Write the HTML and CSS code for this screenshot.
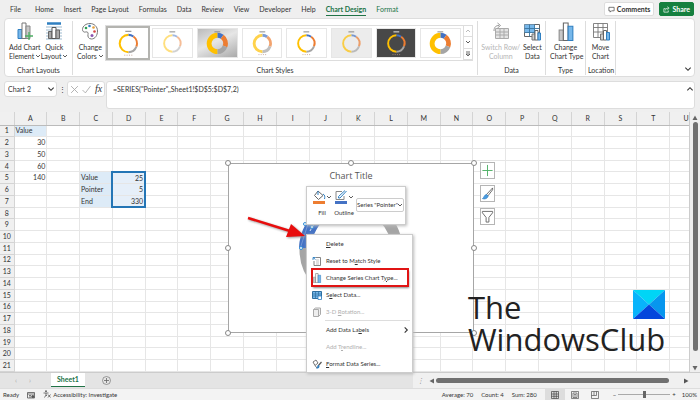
FILE: index.html
```
<!DOCTYPE html>
<html lang="en">
<head>
<meta charset="utf-8">
<title>Chart 2</title>
<link rel="stylesheet" href="styles.css">
</head>
<body>
<svg class="defs" aria-hidden="true">
  <symbol id="chev" viewBox="0 0 6 6"><path d="M1 2l2 2 2-2" fill="none" stroke="currentColor" stroke-width=".8"/></symbol>
  <symbol id="bars" viewBox="0 0 14 18"><path d="M.5 7.500h4v10h-4z" fill="#c8c8c8" stroke="#8a8a8a"/><path d="M4.500 1h4.500v16.500H4.500z" fill="#fff" stroke="#666"/><path d="M9 4h4.500v13.500H9z" fill="#76b7ea" stroke="#2f7fc1"/></symbol>
</svg>

<header class="top">
  <nav class="tabs">
    <a href="#">File</a><a href="#">Home</a><a href="#">Insert</a><a href="#">Page Layout</a><a href="#">Formulas</a><a href="#">Data</a><a href="#">Review</a><a href="#">View</a><a href="#">Developer</a><a href="#">Help</a><a href="#" class="active">Chart Design</a><a href="#" class="green">Format</a>
  </nav>
  <button class="comments"><svg class="i7" viewBox="0 0 8 8"><path d="M1 1.500h6v4H4L2.500 7V5.500H1z" fill="none" stroke="#444" stroke-width=".8"/></svg>Comments</button>
  <button class="share"><svg class="i7" viewBox="0 0 8 8"><path d="M3 3H1v4h5V5M3 5c0-2 1-2.500 3-2.500M5 .8l2 1.700-2 1.700" fill="none" stroke="#fff" stroke-width=".8"/></svg>Share</button>
</header>

<section class="ribbon">
  <div class="group layouts">
    <div class="tools">
      <button class="tool"><svg class="ico" viewBox="0 0 18 19"><path d="M2 7.500h4v9H2z" fill="#76b7ea" stroke="#2f7fc1"/><path d="M6 1h4v15.500H6z" fill="#fff" stroke="#777"/><path d="M10 4h4v12.500h-4z" fill="#c8c8c8" stroke="#888"/><path d="M13 10v8M9 14h8" stroke="#4caf63" stroke-width="1.300"/></svg>Add Chart<br>Element <svg class="i6 inline"><use href="#chev"/></svg></button>
      <button class="tool"><svg class="ico" viewBox="0 0 18 19"><path d="M2 1.500h14" stroke="#2f7fc1" stroke-width="2.500"/><path d="M1 5h16M1 8h16M1 11h16M1 14h16M1 17h16" stroke="#85a9c4" stroke-width=".8"/><path d="M3.500 9.500H7v7H3.500z" fill="#aaa" stroke="#666"/><path d="M7 5.500h4v11H7z" fill="#fff" stroke="#555"/><path d="M11 8h3.500v8.500H11z" fill="#aaa" stroke="#666"/></svg>Quick<br>Layout <svg class="i6 inline"><use href="#chev"/></svg></button>
    </div>
    <div class="caption">Chart Layouts</div>
  </div>
  <div class="group styles">
    <div class="tools">
      <button class="tool"><svg class="ico" viewBox="0 0 18 19"><path d="M9 1.500c-4 0-7.500 2.500-7.500 6 0 2 1.500 3 3 2.500 2-.5 3 .5 2.500 2.500-.5 2 .5 4.500 3.500 4.500 3.500 0 6-3.500 6-8 0-4.500-3.500-7.500-7.500-7.500z" fill="#fff" stroke="#777"/><circle cx="5" cy="6" r="1.300" fill="#2f9e55"/><circle cx="8.500" cy="4" r="1.300" fill="#2f7fc1"/><circle cx="12.500" cy="5.500" r="1.300" fill="#e5a03c"/><circle cx="13.500" cy="9.500" r="1.300" fill="#d64545"/><circle cx="11" cy="13.500" r="1.500" fill="#8c55b0"/></svg>Change<br>Colors <svg class="i6 inline"><use href="#chev"/></svg></button>
      <div class="gallery">
        <div class="thumbs" id="thumbs"></div>
        <div class="spin"><button aria-label="Up" class="dim"><svg class="i6 up"><use href="#chev"/></svg></button><button aria-label="Down"><svg class="i6"><use href="#chev"/></svg></button><button aria-label="More"><svg class="i6" viewBox="0 0 6 6"><path d="M1 1h4M1 3l2 2 2-2z" fill="none" stroke="#444" stroke-width=".8"/></svg></button></div>
      </div>
    </div>
    <div class="caption">Chart Styles</div>
  </div>
  <div class="group data">
    <div class="tools">
      <button class="tool off" disabled><svg class="ico" viewBox="0 0 18 19"><path d="M3.500 6.500h13v10h-13zM3.500 10h13M3.500 13h13M8 6.500v10M12 6.500v10" fill="#e4e4e4" stroke="#aaa"/><path d="M2 9c0-4 2-5.500 5-5.500M5.500 1l3 2.500-3 2.500" fill="none" stroke="#999"/></svg>Switch Row/<br>Column</button>
      <button class="tool"><svg class="ico" viewBox="0 0 18 19"><path d="M1.500 2.500h15v12h-15z" fill="#fff" stroke="#666"/><path d="M1.500 2.500h10v8h-10z" fill="#76b7ea"/><path d="M1.500 6.500h15M1.500 10.500h15M6.500 2.500v12M11.500 2.500v12" stroke="#39749f" stroke-width=".9"/><path d="M9 12h3v6H9z" fill="#ccc" stroke="#777"/><path d="M12 8.500h3V18h-3z" fill="#fff" stroke="#666"/><path d="M15 11h2.500v7H15z" fill="#76b7ea" stroke="#2f7fc1"/></svg>Select<br>Data</button>
    </div>
    <div class="caption">Data</div>
  </div>
  <div class="group type">
    <div class="tools"><button class="tool"><svg class="ico"><use href="#bars"/></svg>Change<br>Chart Type</button></div>
    <div class="caption">Type</div>
  </div>
  <div class="group location">
    <div class="tools"><button class="tool"><svg class="ico" viewBox="0 0 18 19"><path d="M1.500 1.500h14v14h-14zM1.500 5.500h14M1.500 10h14M6 1.500v14M11 1.500v14" fill="#fff" stroke="#777" stroke-width=".9"/><path d="M8.500 12h3v6h-3z" fill="#ccc" stroke="#777"/><path d="M11.500 8.500h3V18h-3z" fill="#fff" stroke="#666"/><path d="M14.500 10.500h3V18h-3z" fill="#76b7ea" stroke="#2f7fc1"/></svg>Move<br>Chart</button></div>
    <div class="caption">Location</div>
  </div>
  <button class="collapse" aria-label="Collapse ribbon"><svg class="i8"><use href="#chev"/></svg></button>
</section>

<section class="formula">
  <label class="namebox"><input value="Chart 2" aria-label="Name box"><svg class="i8"><use href="#chev"/></svg></label>
  <span class="dots">⋮</span>
  <div class="fx"><svg class="i9" viewBox="0 0 8 8"><path d="M1 1l6 6M7 1L1 7" stroke="#aaa" stroke-width=".8"/></svg><svg class="i9" viewBox="0 0 8 8"><path d="M.5 4.500L3 7l4.500-6" fill="none" stroke="#aaa" stroke-width=".8"/></svg><i>fx</i></div>
  <div class="bar"><input value="=SERIES(&quot;Pointer&quot;,,Sheet1!$D$5:$D$7,2)" aria-label="Formula"><svg class="i8 up"><use href="#chev"/></svg></div>
</section>

<main class="sheet">
  <div class="cells"><table id="grid"></table></div>
  <div class="vscroll"><svg class="i6" viewBox="0 0 6 6"><path d="M3 .5L5.500 5h-5z" fill="#666"/></svg><span></span><svg class="i6" viewBox="0 0 6 6"><path d="M3 5.500L5.500 1h-5z" fill="#666"/></svg></div>

  <div class="chart">
    <h2>Chart Title</h2>
    <svg class="donut" viewBox="0 0 104 104">
      <circle cx="52" cy="52" r="46" fill="none" stroke="#a5a5a5" stroke-width="11"/>
      <path d="M6 50A46 46 0 0 1 27 13" fill="none" stroke="#4472c4" stroke-width="12"/>
      <path d="M11 33l6-11" stroke="#dfe7f5"/><path d="M1 51L9 26M9 25l6-4" stroke="#7f9fd8" stroke-width=".8"/>
      <g fill="#fff" stroke="#2f8fd8"><circle cx="2" cy="50" r="1.500"/><circle cx="6" cy="26" r="1.500"/><circle cx="13" cy="29" r="1.500"/></g>
    </svg>
    <b class="h nw"></b><b class="h n"></b><b class="h ne"></b><b class="h w"></b><b class="h e"></b><b class="h sw"></b><b class="h s"></b><b class="h se"></b>
    <div class="side">
      <button aria-label="Chart elements"><svg viewBox="0 0 14 16"><path d="M7 2v12M1.500 8h11" stroke="#4caf63"/></svg></button>
      <button aria-label="Chart styles"><svg viewBox="0 0 14 16"><path d="M12.500 2L6 9l1.500 1.500L12.500 4z" fill="#fff" stroke="#555" stroke-width=".9"/><path d="M6 9l1.800 1.800C7 13.500 4 14.500 1.500 13.500 3.500 12.500 3 9.500 6 9z" fill="#4a9be0" stroke="#2f7fc1" stroke-width=".7"/></svg></button>
      <button aria-label="Chart filters"><svg viewBox="0 0 14 16"><path d="M1.500 2.500h11v1.500L8.500 9v5h-3V9l-4-5z" fill="#fff" stroke="#666"/></svg></button>
    </div>
  </div>

  <div class="brand"><div>The</div><div>WindowsClub</div>
    <svg viewBox="0 0 32 28" preserveAspectRatio="none"><path d="M0 0h32L16 14z" fill="#00d5f6"/><path d="M0 0v28l16-14z" fill="#08b4fb"/><path d="M32 0v28L16 14z" fill="#0796ee"/><path d="M0 28h32L16 14z" fill="#0547dc"/></svg>
  </div>

  <svg class="arrow" viewBox="0 0 60 26"><path d="M1 4l42 13" stroke="#e80d0d" stroke-width="2.500"/><path d="M44 10l14 12-19 1z" fill="#e80d0d"/></svg>

  <div class="mini">
    <button><span><svg class="i14" viewBox="0 0 14 14"><path d="M6 1l5 4.500-4.500 4-4-4z" fill="#fff" stroke="#666"/><path d="M6 1v4M11 4c2 1 2 3 1.500 5" fill="none" stroke="#2f7fc1"/><path d="M1 12.500h12" stroke="#ed7d31" stroke-width="3"/></svg><svg class="i6"><use href="#chev"/></svg></span>Fill</button>
    <button><span><svg class="i14" viewBox="0 0 14 14"><path d="M8 1.500H2v8h8V6" fill="none" stroke="#888"/><path d="M12.500 1L6 8H4.500V6.500L11 .5" fill="#fff" stroke="#2f7fc1"/><path d="M1 12.500h12" stroke="#4472c4" stroke-width="3"/></svg><svg class="i6"><use href="#chev"/></svg></span>Outline</button>
    <label class="series"><select aria-label="Chart element"><option>Series "Pointer"</option></select><svg class="i6"><use href="#chev"/></svg></label>
  </div>

  <div class="menu" role="menu">
    <button role="menuitem"><span></span><em><u>D</u>elete</em></button>
    <button role="menuitem"><svg class="i10" viewBox="0 0 10 10"><path d="M3.500 1.500h5v8H2V5" fill="none" stroke="#777" stroke-width=".9"/><path d="M4 4h3M4 6h3M4 8h3" stroke="#999" stroke-width=".6"/><path d="M1 4V1.500h2.500M1 1.500l2.500 2" fill="none" stroke="#2f7fc1" stroke-width=".9"/></svg><em>Reset to M<u>a</u>tch Style</em></button>
    <button role="menuitem" class="marked"><svg class="i10"><use href="#bars"/></svg><em>Change Series Chart T<u>y</u>pe...</em></button>
    <button role="menuitem"><svg class="i10" viewBox="0 0 10 10"><path d="M.5 1.500h9v7h-9z" fill="#76b7ea" stroke="#2f6f9f"/><path d="M.5 4h9M.5 6h9M3.500 1.500v7M6.500 1.500v7" stroke="#2f6f9f" stroke-width=".7"/><path d="M6 6h3.500v3.500H6z" fill="#fff" stroke="#2f7fc1" stroke-width=".8"/></svg><em>S<u>e</u>lect Data...</em></button>
    <button role="menuitem" disabled><svg class="i10" viewBox="0 0 10 10"><path d="M1.500 2.500h5v7h-5zM1.500 2.500l2-1.500h5v6.500l-2 2" fill="#eee" stroke="#aaa"/></svg><em>3-D <u>R</u>otation...</em></button>
    <hr>
    <button role="menuitem"><span></span><em>Add Data La<u>b</u>els</em><svg class="i8 right"><use href="#chev"/></svg></button>
    <button role="menuitem" disabled><span></span><em>Add T<u>r</u>endline...</em></button>
    <button role="menuitem"><svg class="i10" viewBox="0 0 10 10"><path d="M1 3l3-2 2 3-3 2.500zM3 6.500L5 9" fill="#fff" stroke="#666" stroke-width=".9"/><path d="M9.500 3L6 7" stroke="#555" stroke-width="1.200"/><path d="M6.500 6C5 6.500 5.500 8.500 4 9.500c2 .3 3.500-.5 3.500-2.500z" fill="#2f7fc1"/></svg><em><u>F</u>ormat Data Series...</em></button>
  </div>
</main>

<div class="sheetbar">
  <div class="sheets"><button aria-label="Previous">‹</button><button aria-label="Next">›</button><a href="#" class="tab">Sheet1</a><button aria-label="New sheet"><svg class="i9" viewBox="0 0 9 9"><circle cx="4.500" cy="4.500" r="4" fill="none" stroke="#777" stroke-width=".7"/><path d="M4.500 2v5M2 4.500h5" stroke="#666" stroke-width=".8"/></svg></button></div>
  <div class="hscroll"><i>⋮</i><svg class="i6" viewBox="0 0 6 6"><path d="M.5 3L5 .5v5z" fill="#666"/></svg><span></span><svg class="i6" viewBox="0 0 6 6"><path d="M5.500 3L1 .5v5z" fill="#555"/></svg></div>
</div>

<footer class="status">
  <span class="ready">Ready</span>
  <svg class="i8" viewBox="0 0 8 8"><path d="M.5 1.500h7v5.500h-7zM.5 3h7M2 4.500h2M2 6h2" fill="none" stroke="#555" stroke-width=".8"/><circle cx="5.800" cy="5.500" r="1.500" fill="#555"/></svg>
  <span class="access"><svg class="i8" viewBox="0 0 8 8"><circle cx="3" cy="1.200" r=".9" fill="#555"/><path d="M.5 3h5M3 3v2L1.500 7.500M3 5l1 1M5 4.500l2.500 3M7.500 4.500L5 7.500" fill="none" stroke="#555" stroke-width=".8"/></svg>Accessibility: Investigate</span>
  <span class="stats"><span>Average: 70</span><span>Count: 4</span><span>Sum: 280</span></span>
  <span class="views">
    <button class="on" aria-label="Normal"><svg class="i8" viewBox="0 0 8 8"><path d="M.5.5h7v7h-7zM.5 3h7M.5 5.300h7M3 .5v7M5.300.5v7" fill="none" stroke="#444" stroke-width=".7"/></svg></button>
    <button aria-label="Page layout"><svg class="i8" viewBox="0 0 8 8"><path d="M.5.5h7v7h-7zM2 2h4v4.500H2zM3 3.500h2M3 5h2" fill="none" stroke="#555" stroke-width=".7"/></svg></button>
    <button aria-label="Page break"><svg class="i8" viewBox="0 0 8 8"><path d="M.5.5h7v7h-7zM3 .5v4M5.500.5v4M.5 4.500h5" fill="none" stroke="#555" stroke-width=".7"/></svg></button>
  </span>
  <label class="zoom"><span>−</span><input type="range" aria-label="Zoom" min="0" max="100" value="50"><span>+</span><span>100%</span></label>
</footer>
<script src="app.js"></script>
</body>
</html>
```
FILE: styles.css
```
* { box-sizing: border-box; }
body { margin: 0; height: 100vh; display: flex; flex-direction: column; overflow: hidden; background: #efefef; color: #333; font: 7px/9px Lato, "Open Sans", sans-serif; }
button, input, select { font: inherit; color: inherit; border: 0; background: none; padding: 0; margin: 0; min-width: 0; }
a { color: inherit; text-decoration: none; }
svg { display: block; flex: none; }
.defs { position: absolute; width: 0; height: 0; }
.i6 { width: 6px; height: 6px; }
.i7 { width: 7px; height: 7px; }
.i8 { width: 8px; height: 8px; }
.i9 { width: 9px; height: 9px; }
.i10 { width: 10px; height: 10px; }
.i14 { width: 14px; height: 14px; }
.inline { display: inline-block; margin-left: -1px; }

.top { display: flex; align-items: center; gap: 5px; height: 18px; padding: 0 6px 0 10px; flex: none; }
.tabs { display: flex; gap: 10px; flex: 1; white-space: nowrap; }
.tabs a { padding: 3px 0 1px; border-bottom: 1px solid transparent; }
.tabs a:first-child { margin-right: 4px; }
.tabs .green, .tabs .active { color: #217346; }
.tabs .active { font-weight: 700; border-color: #217346; }
.comments, .share { display: flex; align-items: center; gap: 2px; height: 14px; padding: 0 3px; border-radius: 2px; background: #fff; border: 1px solid #ddd; font-weight: 700; }
.share { background: #15803f; border-color: #15803f; color: #fff; }

.ribbon { position: relative; display: flex; height: 59px; margin: 0 5px 0 4px; flex: none; background: #fff; border: 1px solid #ddd; border-radius: 4px; padding: 2px 0 1px; }
.group { display: flex; flex-direction: column; justify-content: space-between; border-right: 1px solid #ddd; padding: 0 4px; }
.layouts { width: 68px; }
.styles { flex: 1; }
.data { width: 68px; padding: 0 2px; }
.type, .location { width: 40px; }
.location { width: 30px; margin-right: 78px; padding: 0 2px; }
.tools { display: flex; justify-content: space-around; align-items: flex-start; }
.styles .tools { gap: 1px; }
.tool { display: block; white-space: nowrap; text-align: center; }
.tool .ico { width: 18px; height: 19px; margin: 1px auto 2px; }
.off { color: #b5b5b5; }
.caption { text-align: center; }
.gallery { display: flex; height: 36px; margin-top: 4px; border: 1px solid #ddd; flex: 1; }
.thumbs { display: grid; grid-template-columns: repeat(8, 1fr); flex: 1; align-items: center; }
.thumb { height: 30px; margin: 0 2px; border: 1px solid #e6e6e6; background: #fff; }
.thumb svg { width: 100%; height: 100%; }
.thumb.on { height: 34px; margin: 0; border: 2px solid #b4b4b0; }
.thumb.silver { background: linear-gradient(155deg, #bbb, #e6e6e6 45%, #aaa); }
.thumb.pale { background: #ececec; }
.thumb.dark { background: #484848; }
.spin { display: flex; flex-direction: column; width: 9px; border-left: 1px solid #ddd; }
.spin button { flex: 1; display: grid; place-items: center; border-bottom: 1px solid #ddd; }
.dim { color: #aaa; }
.collapse { position: absolute; right: 2px; bottom: 3px; }

.formula { display: flex; align-items: flex-start; height: 31px; margin: 4px 5px 0 4px; flex: none; }
.namebox, .fx, .bar { display: flex; align-items: center; background: #fff; border: 1px solid #ddd; border-radius: 3px; }
.namebox { width: 53px; height: 16px; padding: 0 1px 0 3px; }
.namebox input { flex: 1; width: 0; }
.dots { width: 10px; text-align: center; line-height: 16px; }
.fx { width: 38px; height: 16px; justify-content: space-around; font: italic 10px/12px "Liberation Serif", serif; }
.bar { flex: 1; align-items: flex-start; height: 28px; margin-left: 1px; padding: 3px 0 0 6px; }
.bar input { flex: 1; }
.up { transform: rotate(180deg); }
.right { transform: rotate(-90deg); }

.sheet { position: relative; display: flex; flex: 1; min-height: 0; }
.cells { flex: 1; overflow: hidden; background: #fff; border-right: 1px solid #ccc; }
table { width: calc(100% + 14px); height: 100%; border-collapse: collapse; table-layout: fixed; }
th, td { padding: 0 1px; height: 11px; line-height: 9px; white-space: nowrap; font-weight: 400; border: 1px solid #e6e6e6; border-top: 0; border-left: 0; text-align: right; }
th { background: #f0f0f0; text-align: center; border-color: #d4d4d4; }
tr > th:first-child { width: 14px; }
thead th { height: 13px; border-bottom-color: #bbb; }
td.text { text-align: left; background: #ddebf7; }
td.pick { background: #e6eff9; border-right: 2px solid #2475b5; border-left: 2px solid #2475b5; }
td.first { border-top: 2px solid #2475b5; }
td.last { border-bottom: 2px solid #2475b5; }
.vscroll { width: 10px; display: flex; flex-direction: column; align-items: center; padding: 3px 0 1px; gap: 1px; }
.vscroll span { flex: 1; width: 5px; margin-bottom: 13px; border-radius: 3px; background: #707070; }

.chart { position: absolute; left: 228px; top: 51px; width: 246px; height: 170px; background: #fff; border: 1px solid #a6a6a6; }
.chart h2 { margin: 6px 0 0; text-align: center; font: 9px/12px "Open Sans", sans-serif; color: #555; }
.donut { position: absolute; left: 70px; top: 34px; width: 104px; height: 104px; }
.h { position: absolute; width: 6px; height: 6px; border: 1px solid #888; border-radius: 50%; background: #fff; }
.nw, .w, .sw { left: -4px; }
.ne, .e, .se { right: -4px; }
.n, .s { left: 119px; }
.nw, .n, .ne { top: -4px; }
.w, .e { top: 81px; }
.sw, .s, .se { bottom: -4px; }
.side { position: absolute; left: 251px; top: -2px; display: flex; flex-direction: column; gap: 6px; }
.side button { width: 15px; height: 17px; background: #fff; border: 1px solid #b5b5b5; }
.side svg { width: 13px; height: 15px; }

.brand { position: absolute; left: 468px; top: 179px; color: #222; font: 31px/32px "Open Sans", sans-serif; }
.brand svg { position: absolute; right: 0; top: -1px; width: 32px; height: 29px; }
.arrow { position: absolute; left: 247px; top: 102px; width: 60px; height: 26px; z-index: 1; filter: drop-shadow(1px 1px 1px #999); }

.mini, .menu { position: absolute; left: 306px; background: #fff; border: 1px solid #ccc; box-shadow: 1px 1px 3px #bbb; font-size: 6px; line-height: 8px; }
.mini { top: 74px; width: 100px; height: 39px; display: flex; align-items: flex-start; gap: 2px; padding: 3px 1px 0 5px; }
.mini span { display: flex; align-items: center; margin-bottom: 5px; }
.series { position: relative; flex: 1; min-width: 0; margin-top: 8px; border: 1px solid #ccc; border-radius: 2px; }
.series select { appearance: none; width: 100%; height: 12px; padding-right: 5px; }
.series svg { position: absolute; right: 0; top: 3px; }
.menu { top: 122px; width: 107px; z-index: 2; }
.menu button { display: flex; align-items: center; gap: 4px; width: 100%; height: 17px; padding: 0 2px 0 5px; text-align: left; }
.menu span { width: 10px; }
.menu em { flex: 1; font-style: normal; white-space: nowrap; }
.menu button:disabled { color: #b0b0b0; }
.menu hr { margin: 0 2px 0 18px; border: 0; height: 1px; background: #ddd; }
.menu .marked { outline: 2px solid #e01414; outline-offset: -1px; width: 96px; margin-left: 5px; padding: 0; box-shadow: 1px 2px 2px #888; }

.sheetbar { display: flex; height: 16px; flex: none; background: #e4e4e4; border-top: 1px solid #ccc; }
.sheets { display: flex; width: 59%; gap: 12px; padding-left: 15px; color: #aaa; }
.sheets button { align-self: center; }
.tab { width: 34px; height: 14px; margin: 0 5px 0 8px; background: #fff; color: #217346; font-weight: 700; line-height: 13px; text-align: center; border-bottom: 1px solid #217346; }
.hscroll { display: flex; align-items: center; flex: 1; background: #f0f0f0; padding-right: 11px; gap: 1px; }
.hscroll i { width: 15px; text-align: center; color: #777; }
.hscroll span { flex: 1; height: 5px; margin-right: 13px; border-radius: 3px; background: #707070; }

.status { display: flex; align-items: center; height: 12px; flex: none; padding: 0 3px; gap: 8px; background: #f3f3f3; border-top: 1px solid #ddd; font-size: 6px; line-height: 10px; }
.access { display: flex; gap: 2px; flex: 1; }
.stats { display: flex; gap: 8px; }
.views { display: flex; }
.views button { width: 20px; height: 11px; display: grid; place-items: center; }
.views .on { background: #ddd; }
.zoom { display: flex; align-items: center; gap: 2px; }
.zoom input { appearance: none; width: 52px; height: 1px; background: #aaa; }
.zoom input::-webkit-slider-thumb { appearance: none; width: 3px; height: 7px; background: #666; }
.zoom span:last-child { margin-left: 4px; }
```
FILE: app.js
```
// Builds the worksheet cells.
const columns = 'ABCDEFGHIJKLMNOPQRSTU'.split('');
const values = { A1: 'Value', A2: 30, A3: 50, A4: 60, A5: 140, C5: 'Value', C6: 'Pointer', C7: 'End', D5: 25, D6: 5, D7: 330 };
const classes = { D5: 'pick first', D6: 'pick', D7: 'pick last' };

let html = '<thead><tr><th></th>' + columns.map(c => `<th>${c}</th>`).join('') + '</tr></thead><tbody>';
for (let row = 1; row <= 21; row++) {
  html += `<tr><th>${row}</th>` + columns.map(c => {
    const key = c + row;
    const value = values[key] ?? '';
    const cls = classes[key] || (typeof value === 'string' && value ? 'text' : '');
    return `<td class="${cls}">${value}</td>`;
  }).join('') + '</tr>';
}
document.getElementById('grid').innerHTML = html + '</tbody>';

// Draws the chart style thumbnails: [class, ring width, opacity, legend].
const thumbs = [['on', 2, 1, 1], ['', 2, .5, 0], ['silver', 5, 1, 0], ['', 3, .7, 1], ['', 2, 1, 1], ['pale', 2, .7, 0], ['dark', 2, 1, 1], ['', 5, 1, 0]];
document.getElementById('thumbs').innerHTML = thumbs.map(([cls, width, opacity, legend]) => `
<button class="thumb ${cls}" aria-label="Chart style"><svg viewBox="0 0 40 28">
<path d="M17 2.500h6" stroke="${cls === 'dark' ? '#fff' : '#777'}" stroke-width=".9"/>
<g fill="none" stroke-width="${width}" opacity="${opacity}">
<path d="M20 6a8.500 8.500 0 0 1 5 1.600" stroke="#4472c4"/><path d="M25 7.600a8.500 8.500 0 0 1 2.900 9.900" stroke="#ed7d31"/><path d="M27.900 17.500a8.500 8.500 0 0 1-7.900 5.500" stroke="#a5a5a5"/><path d="M20 23a8.500 8.500 0 0 1 0-17" stroke="#ffc000"/></g>
${legend ? '<path d="M16 26h8" stroke="#b98" stroke-width=".8" stroke-dasharray="1 1.300"/>' : ''}</svg></button>`).join('');
```
